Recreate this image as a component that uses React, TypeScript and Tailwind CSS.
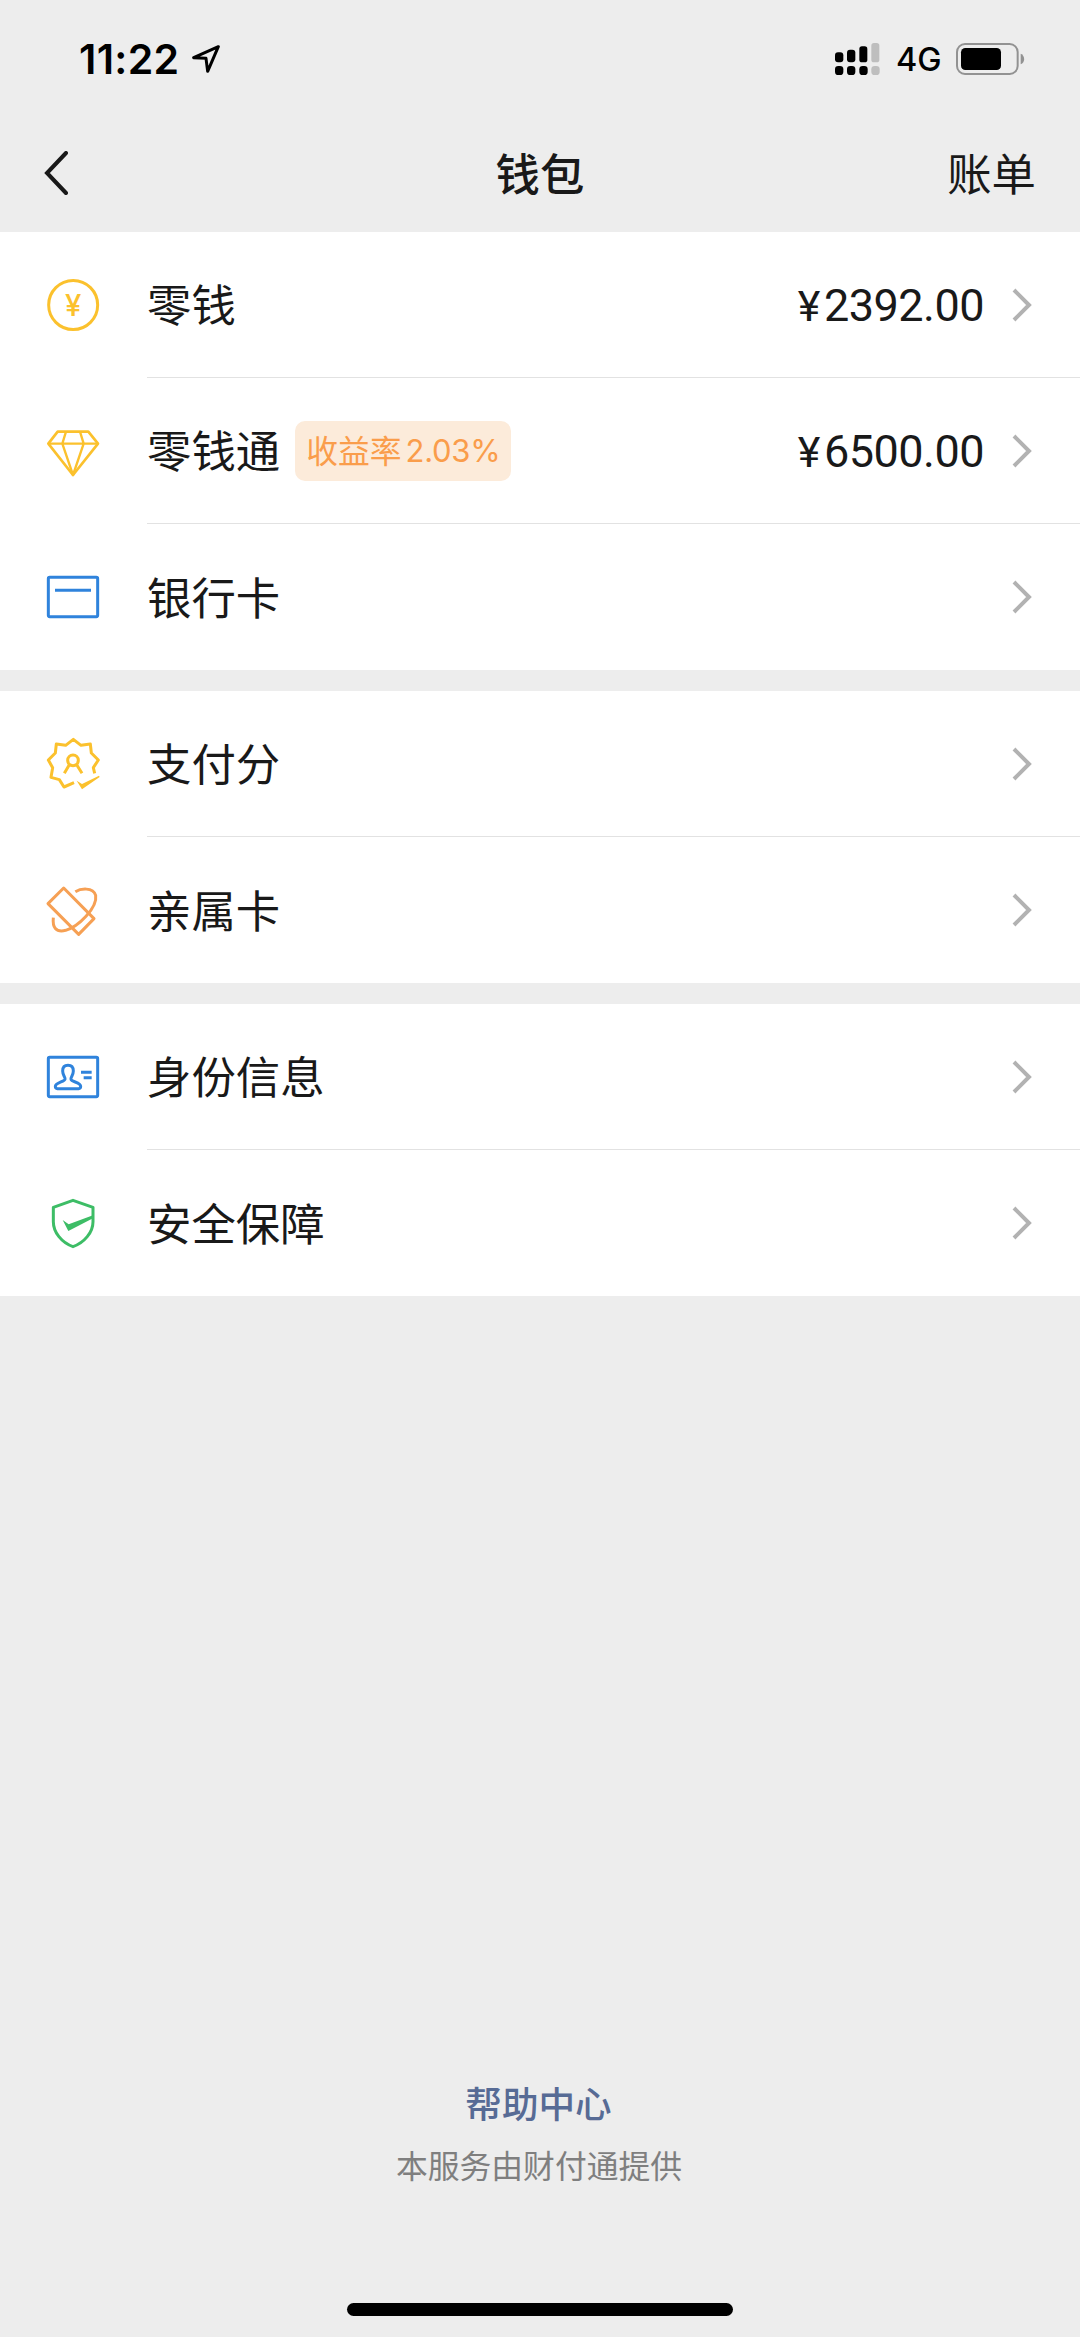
import type { ReactNode } from 'react';

const YELLOW = '#fbc12d';
const BLUE = '#2f83dc';
const ORANGE = '#f6a054';
const GREEN = '#3dbd66';

function Icon({ children, color }: { children: ReactNode; color: string }) {
  return (
    <svg
      viewBox="0 0 180 180"
      className="w-[60px] h-[60px] shrink-0"
      fill="none"
      stroke={color}
      strokeWidth="9"
      strokeLinejoin="round"
    >
      {children}
    </svg>
  );
}

function BalanceIcon() {
  return (
    <Icon color={YELLOW}>
      <circle cx="90.5" cy="90" r="73.5" />
      <text
        x="90.5"
        y="124"
        textAnchor="middle"
        fontSize="88"
        fill={YELLOW}
        stroke="none"
        className="font-['Inter',sans-serif] font-medium"
      >
        ¥
      </text>
    </Icon>
  );
}

function DiamondIcon() {
  return (
    <Icon color={YELLOW}>
      <path d="M44 32h92l29 36-75 94L16 68z" strokeWidth="8" />
      <path d="M16 68h149M69 32L58 68l32 94 32-94-11-36" strokeWidth="7" />
    </Icon>
  );
}

function BankCardIcon() {
  return (
    <Icon color={BLUE}>
      <rect x="16" y="31" width="148" height="118" rx="4" />
      <path d="M36 70h108" />
    </Icon>
  );
}

function PayScoreIcon() {
  return (
    <Icon color={YELLOW}>
      <path d="M155 118l-4-17 15-23-21-21-3-27-28 4-23-18-23 18-28-4-3 27-21 21 13 23-5 29 25 7 14 22 30-13" />
      <circle cx="90" cy="79" r="16" />
      <path d="M79 92l-15 26M101 92l16 26" />
      <path d="M101 140l16 10 51-25 2 4-53 37z" fill={YELLOW} stroke="none" />
    </Icon>
  );
}

function FamilyCardIcon() {
  return (
    <Icon color={ORANGE}>
      <path d="M62 24L15 71l92 92 46-47z" />
      <path d="M97 35c15-9 53-15 61 11 6 38-53 95-90 105-30 7-40-9-37-38" />
    </Icon>
  );
}

function IdentityIcon() {
  return (
    <Icon color={BLUE}>
      <rect x="16" y="31" width="148" height="118" rx="4" />
      <path d="M66 97c2-6-7-11-7-25 0-11 6-17 16-17s16 6 16 17c0 14-9 19-7 25 2 8 29 9 29 21 0 5-3 7-6 7H43c-4 0-6-3-6-7 0-11 27-14 29-21z" />
      <path d="M114 76h32M122 92h24" />
    </Icon>
  );
}

function SecurityIcon() {
  return (
    <Icon color={GREEN}>
      <path d="M90 22l60 21v43c0 32-26 63-60 75-34-12-59-43-59-75V43z" />
      <path d="M59 81l18 13 73-27v9L76 114z" fill={GREEN} stroke="none" />
    </Icon>
  );
}

interface WalletItem {
  label: string;
  icon: ReactNode;
  badge?: [string, string];
  amount?: string;
}

const sections: WalletItem[][] = [
  [
    { label: '零钱', icon: <BalanceIcon />, amount: '2392.00' },
    { label: '零钱通', icon: <DiamondIcon />, badge: ['收益率', '2.03%'], amount: '6500.00' },
    { label: '银行卡', icon: <BankCardIcon /> },
  ],
  [
    { label: '支付分', icon: <PayScoreIcon /> },
    { label: '亲属卡', icon: <FamilyCardIcon /> },
  ],
  [
    { label: '身份信息', icon: <IdentityIcon /> },
    { label: '安全保障', icon: <SecurityIcon /> },
  ],
];

function StatusBar() {
  return (
    <div className="flex items-center h-[113px] pt-[5px] pl-[79px] pr-[55px] text-black font-['Inter',sans-serif]">
      <span className="text-[41px] leading-none font-semibold tracking-[0.3px]">11:22</span>
      <svg viewBox="0 0 84 84" className="w-7 h-7 ml-[13px]" fill="none" stroke="currentColor" strokeWidth="9" strokeLinejoin="round">
        <path d="M79 5L5 38l37 2 5 39z" />
      </svg>

      <div className="flex items-center ml-auto">
        {/* Dual SIM signal */}
        <svg viewBox="0 0 135 96" className="w-[45px] h-8" fill="currentColor">
          <rect x="0" y="28" width="25" height="30" rx="9" />
          <rect x="36" y="20" width="25" height="38" rx="9" />
          <rect x="73" y="10" width="24" height="48" rx="8" />
          <rect x="109" y="0" width="24" height="58" rx="8" fill="#bebebe" />
          <rect x="0" y="69" width="25" height="27" rx="10" />
          <rect x="36" y="69" width="25" height="27" rx="10" />
          <rect x="73" y="69" width="25" height="27" rx="10" />
          <rect x="109" y="69" width="25" height="27" rx="10" fill="#bebebe" />
        </svg>
        <span className="ml-4 w-[47px] pt-0.5 text-[32.5px] leading-none font-medium">4G</span>
        <svg viewBox="0 0 207 96" className="w-[69px] h-8 ml-[13px]">
          <rect x="3" y="3" width="182" height="90" rx="24" fill="none" stroke="#929292" strokeWidth="6" />
          <rect x="15" y="15" width="120" height="66" rx="13" />
          <path d="M194 32c14 5 14 27 0 32z" fill="#929292" />
        </svg>
      </div>
    </div>
  );
}

function NavBar() {
  return (
    <div className="grid grid-cols-3 items-center h-[119px] pl-11 pr-11 text-[44.4px] leading-none">
      <svg viewBox="0 0 24 44" className="w-6 h-11" fill="none" stroke="currentColor" strokeWidth="4" strokeLinecap="round">
        <path d="M22 2L3 22l19 20" />
      </svg>
      <h1 className="text-center font-medium">钱包</h1>
      <span className="text-right">账单</span>
    </div>
  );
}

function Row({ item, last }: { item: WalletItem; last: boolean }) {
  return (
    <div className="flex items-center h-[146px] pl-[43px]">
      {item.icon}
      <div
        className={
          last
            ? 'flex flex-1 items-center h-full ml-11 pr-12'
            : 'flex flex-1 items-center h-full ml-11 pr-12 border-b border-[#e2e2e2]'
        }
      >
        <span className="pb-0.5 text-[44.4px] leading-none">{item.label}</span>
        {item.badge && (
          <span className="flex items-center h-[60px] w-[216px] ml-[15px] pl-[11px] rounded-[10px] bg-[#fcebda] text-[#fa9d4b] leading-none">
            <span className="pb-0.5 text-[31.8px]">{item.badge[0]}</span>
            <span className="ml-1 text-[31px] tracking-[-0.3px] font-['Inter',sans-serif]">{item.badge[1]}</span>
          </span>
        )}
        {item.amount && (
          <span className="flex items-baseline ml-auto pt-0.5 text-[45px] leading-none tracking-[-0.5px] font-['Roboto',sans-serif]">
            <span className="mr-1 text-[43px]">¥</span>
            {item.amount}
          </span>
        )}
        <svg
          viewBox="0 0 20 34"
          className={item.amount ? 'w-5 h-[34px] ml-7' : 'w-5 h-[34px] ml-auto'}
          fill="none"
          stroke="#b2b2b2"
          strokeWidth="4"
        >
          <path d="M2 2l15 15L2 32" />
        </svg>
      </div>
    </div>
  );
}

export default function App() {
  return (
    <div className="flex flex-col w-[1080px] h-[2337px] bg-[#ededed] text-[#191919] font-['Noto_Sans_CJK_SC',sans-serif]">
      <StatusBar />
      <NavBar />

      <div className="flex flex-col gap-[21px]">
        {sections.map((items, i) => (
          <div key={i} className="bg-white">
            {items.map((item, j) => (
              <Row key={item.label} item={item} last={j === items.length - 1} />
            ))}
          </div>
        ))}
      </div>

      {/* Footer */}
      <div className="flex flex-col items-center mt-auto pb-[21px] leading-none">
        <a className="pr-[3px] text-[36.6px] font-medium text-[#576b95]">帮助中心</a>
        <p className="mt-7 pr-0.5 text-[31.8px] text-[#7f7f7f]">本服务由财付通提供</p>
        <div className="w-[386px] h-[13px] mt-[122px] rounded-full bg-black" />
      </div>
    </div>
  );
}
